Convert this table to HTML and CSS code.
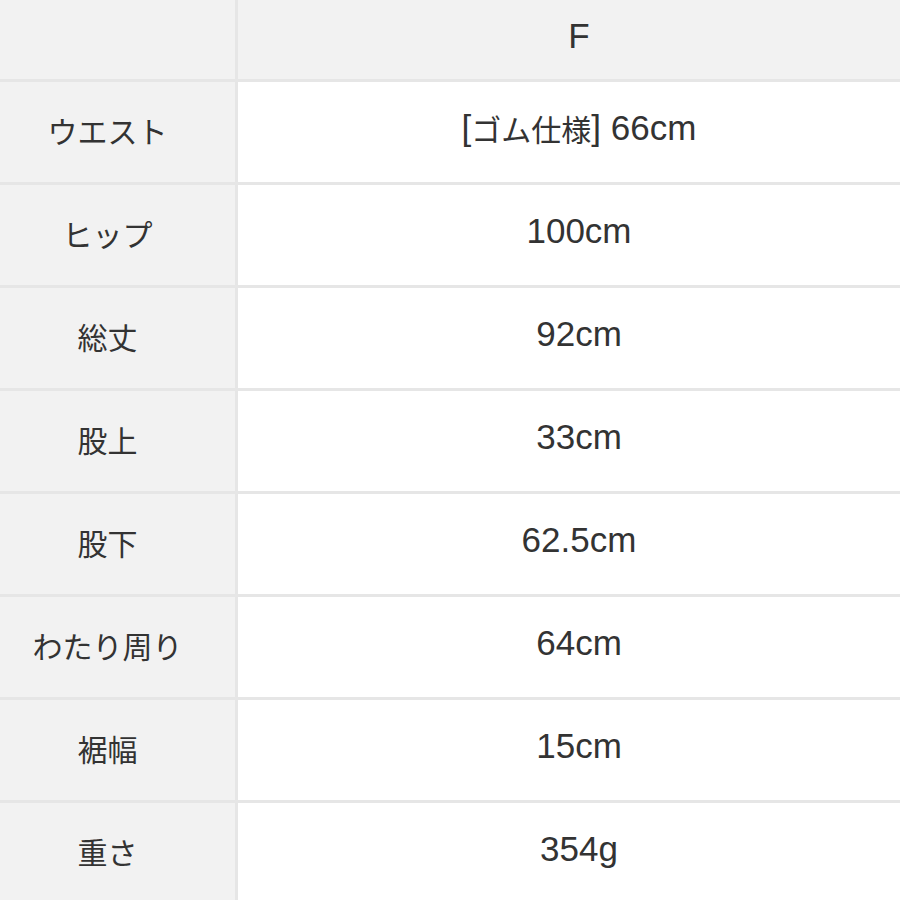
FILE: index.html
```html
<!DOCTYPE html>
<html lang="ja">
<head>
<meta charset="utf-8">
<link rel="stylesheet" href="styles.css">
</head>
<body>
<div class="table">
  <div class="cell label head"></div>
  <div class="cell value head">F</div>

  <div class="cell label"><span class="jp">ウエスト</span></div>
  <div class="cell value">[<span class="jp">ゴム仕様</span>]&nbsp;66cm</div>

  <div class="cell label"><span class="jp">ヒップ</span></div>
  <div class="cell value">100cm</div>

  <div class="cell label"><span class="jp">総丈</span></div>
  <div class="cell value">92cm</div>

  <div class="cell label"><span class="jp">股上</span></div>
  <div class="cell value">33cm</div>

  <div class="cell label"><span class="jp">股下</span></div>
  <div class="cell value">62.5cm</div>

  <div class="cell label"><span class="jp">わたり周り</span></div>
  <div class="cell value">64cm</div>

  <div class="cell label"><span class="jp">裾幅</span></div>
  <div class="cell value">15cm</div>

  <div class="cell label"><span class="jp">重さ</span></div>
  <div class="cell value">354g</div>
</div>
</body>
</html>
```

FILE: styles.css
```css
html, body {
  margin: 0;
  padding: 0;
  background: #e6e6e6;
  overflow: hidden;
}

.table {
  display: grid;
  grid-template-columns: 235px 1fr;
  grid-template-rows: 79px repeat(8, 100px);
  gap: 3px;
  width: 900px;
  height: 900px;
  background: #e6e6e6;
}

.cell {
  display: flex;
  align-items: center;
  justify-content: center;
  font-family: "Liberation Sans", "Noto Sans CJK JP", sans-serif;
  font-size: 35px;
  color: #333333;
  white-space: nowrap;
  padding-bottom: 8px;
}

.label {
  background: #f2f2f2;
  padding-right: 20px;
  padding-bottom: 4px;
}

.value {
  background: #ffffff;
  padding-left: 20px;
}

.head {
  background: #f2f2f2;
}

.jp {
  font-family: "Noto Sans CJK JP", sans-serif;
  font-size: 30px;
}
```
